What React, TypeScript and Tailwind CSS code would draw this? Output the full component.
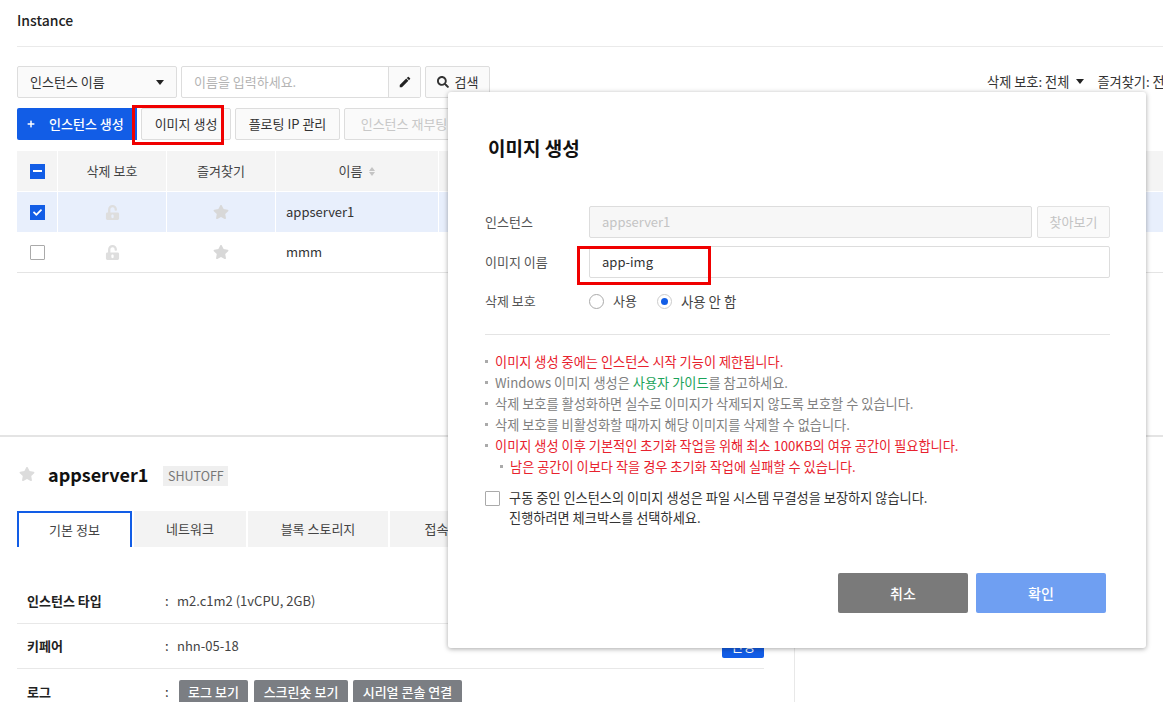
import { FaStar, FaSearch, FaCheck, FaPlus, FaUnlockAlt } from "react-icons/fa";
import { MdEdit } from "react-icons/md";
import { ReactNode } from "react";

const font = { fontFamily: '"Noto Sans CJK KR", "Noto Sans", sans-serif' };

const Caret = () => <span className="inline-block w-0 h-0 border-x-[4.5px] border-x-transparent border-t-[5px] border-t-[#222]" />;

const ToolButton = ({ children, disabled, className }: { children: ReactNode; disabled?: boolean; className: string }) => (
  <div className={`h-8 flex items-center justify-center shrink-0 bg-[#fafafa] border border-[#ddd] rounded-[2px] text-[13px] ${disabled ? "text-[#c8c8c8]" : "text-[#333]"} ${className}`}>
    {children}
  </div>
);

const Row = ({ name, selected }: { name: string; selected?: boolean }) => (
  <div className={`flex h-10 ${selected ? "bg-[#e8effc]" : "bg-white"}`}>
    <div className="w-10 flex items-center justify-center shrink-0">
      {selected ? (
        <span className="w-[15px] h-[15px] bg-[#125de6] flex items-center justify-center text-white"><FaCheck size={9} /></span>
      ) : (
        <span className="w-[15px] h-[15px] bg-white border border-[#aaa] rounded-[1px]" />
      )}
    </div>
    <div className="w-[109px] flex items-center justify-center border-l border-white text-[#dedede]"><FaUnlockAlt size={15} /></div>
    <div className="w-[109px] flex items-center justify-center border-l border-white text-[#d8d8d8]"><FaStar size={16} /></div>
    <div className="w-[163px] flex items-center pl-[10px] border-l border-white text-[13px] text-[#333]">{name}</div>
    <div className="flex-1 border-l border-white" />
  </div>
);

const Head = ({ children, w }: { children: ReactNode; w: string }) => (
  <div className={`${w} flex items-center justify-center border-l border-white text-[13px] text-[#444]`}>{children}</div>
);

const Tab = ({ children, w, active }: { children: ReactNode; w: string; active?: boolean }) => (
  <div className={`${w} h-9 shrink-0 flex items-center justify-center text-[13px] text-[#444] ${active ? "border-2 border-b-0 border-[#125de6] bg-white" : "bg-[#f3f3f3]"}`}>{children}</div>
);

const InfoRow = ({ label, children, last }: { label: string; children: ReactNode; last?: boolean }) => (
  <div className={`flex items-center h-[45px] text-[13px] ${last ? "" : "border-b border-[#e8e8e8]"}`}>
    <span className="w-[148px] pl-[10px] font-bold text-[#222]">{label}</span>
    <span className="w-3 text-[#333]">:</span>
    {children}
  </div>
);

const DarkButton = ({ children, w }: { children: ReactNode; w: string }) => (
  <span className={`${w} h-[24px] flex items-center justify-center bg-[#7b7e83] text-white rounded-[2px] text-[13px] font-medium`}>{children}</span>
);

const Note = ({ children, red, indent }: { children: ReactNode; red?: boolean; indent?: boolean }) => (
  <li className={`flex items-center h-[21px] text-[13.2px] ${red ? "text-[#e8222e]" : "text-[#808080]"} ${indent ? "pl-[15px]" : ""}`}>
    <span className="w-[3px] h-[3px] bg-[#aaa] mr-[7px] shrink-0" />
    <span>{children}</span>
  </li>
);

const RedBox = ({ className }: { className: string }) => (
  <div className={`absolute border-[3px] border-[#f00000] ${className}`} />
);

export default function App() {
  return (
    <div className="relative w-[1163px] h-[702px] overflow-hidden bg-white text-[#333]" style={font}>
      {/* Top section */}
      <div className="h-[437px] pl-[17px] border-b-2 border-[#e4e4e4]">
        <div className="h-[47px] pt-[10px] border-b border-[#eaeaea] text-[14px] font-medium text-[#222]">Instance</div>

        <div className="flex mt-[19px] gap-1 h-8">
          <div className="w-[160px] shrink-0 flex items-center justify-between pl-3 pr-3 border border-[#ddd] rounded-[2px] bg-[#fafafa] text-[13px]">
            인스턴스 이름 <Caret />
          </div>
          <div className="w-[240px] shrink-0 flex border border-[#ddd] rounded-[2px]">
            <span className="flex-1 flex items-center pl-3 text-[13px] text-[#b4b4b4]">이름을 입력하세요.</span>
            <span className="w-8 flex items-center justify-center border-l border-[#ddd] bg-[#fafafa] text-[#222]"><MdEdit size={14} /></span>
          </div>
          <div className="w-[65px] shrink-0 flex items-center justify-center gap-[6px] border border-[#ddd] rounded-[2px] bg-[#fafafa] text-[13px]">
            <FaSearch size={12} /> 검색
          </div>
          <div className="ml-[493px] shrink-0 flex items-center gap-[13px] whitespace-nowrap text-[13.2px]">
            <span className="flex items-center gap-[7px]">삭제 보호: 전체 <Caret /></span>
            <span>즐겨찾기: 전체</span>
          </div>
        </div>

        <div className="flex mt-[10px] gap-1">
          <div className="w-[120px] h-8 shrink-0 flex items-center pl-[10px] gap-[14px] bg-[#125de6] text-white text-[13px] font-medium rounded-l-[2px]">
            <FaPlus size={8} /> 인스턴스 생성
          </div>
          <ToolButton className="w-[90px]">이미지 생성</ToolButton>
          <ToolButton className="w-[105px]">플로팅 IP 관리</ToolButton>
          <ToolButton disabled className="w-[120px]">인스턴스 재부팅</ToolButton>
        </div>

        <div className="mt-[11px] border-b border-[#e4e4e4]">
          <div className="flex h-10 bg-[#f4f4f4] border-b border-white box-content">
            <div className="w-10 flex items-center justify-center shrink-0">
              <span className="w-[15px] h-[15px] bg-[#125de6] flex items-center justify-center">
                <span className="w-[9px] h-[2px] bg-white" />
              </span>
            </div>
            <Head w="w-[109px]">삭제 보호</Head>
            <Head w="w-[109px]">즐겨찾기</Head>
            <Head w="w-[163px]">
              이름
              <span className="ml-[7px] flex flex-col gap-px">
                <span className="w-0 h-0 border-x-[3px] border-x-transparent border-b-[4px] border-b-[#c4c4c4]" />
                <span className="w-0 h-0 border-x-[3px] border-x-transparent border-t-[4px] border-t-[#c4c4c4]" />
              </span>
            </Head>
            <div className="flex-1 border-l border-white" />
          </div>
          <Row name="appserver1" selected />
          <Row name="mmm" />
        </div>
      </div>

      {/* Detail section */}
      <div className="pl-[17px]">
        <div className="flex items-center mt-[28px] h-[22px]">
          <FaStar size={16} className="ml-[2px] mb-1 text-[#dcdcdc]" />
          <span className="ml-[13px] mb-1 text-[18px] font-bold text-[#111]">appserver1</span>
          <span className="ml-[15px] h-5 w-[65px] flex items-center justify-center bg-[#efefef] text-[12.5px] text-[#777]">SHUTOFF</span>
        </div>
        <div className="flex mt-[24px] gap-[2px]">
          <Tab w="w-[115px]" active>기본 정보</Tab>
          <Tab w="w-[112px]">네트워크</Tab>
          <Tab w="w-[140px]">블록 스토리지</Tab>
          <Tab w="w-[120px]">접속 정보</Tab>
        </div>
        <div className="flex mt-[32px]">
          <div className="w-[747px] shrink-0">
            <InfoRow label="인스턴스 타입"><span className="text-[#444]">m2.c1m2 (1vCPU, 2GB)</span></InfoRow>
            <InfoRow label="키페어">
              <span className="text-[#444]">nhn-05-18</span>
              <span className="ml-auto w-[42px] h-[24px] flex items-center justify-center bg-[#125de6] text-white rounded-[2px]">변경</span>
            </InfoRow>
            <InfoRow label="로그" last>
              <span className="flex gap-[5px] ml-[2px]">
                <DarkButton w="w-[69px]">로그 보기</DarkButton>
                <DarkButton w="w-[94px] ml-px">스크린숏 보기</DarkButton>
                <DarkButton w="w-[109px]">시리얼 콘솔 연결</DarkButton>
              </span>
            </InfoRow>
          </div>
          <div className="ml-[30px] h-[150px] border-l border-[#e8e8e8]" />
        </div>
      </div>

      {/* Create image dialog */}
      <div className="absolute left-[448px] top-[92px] w-[698px] h-[556px] bg-white rounded-[3px] shadow-[0_1px_5px_rgba(0,0,0,0.35)] pl-[37px] pr-[36px]">
        <h2 className="mt-[43px] pl-[3px] text-[19px] leading-[26px] font-bold text-[#111]">이미지 생성</h2>

        <div className="mt-[45px] flex flex-col text-[13px] text-[#555]">
          <div className="flex items-center h-8">
            <span className="w-[104px]">인스턴스</span>
            <span className="w-[443px] h-8 flex items-center pl-3 bg-[#f7f7f7] border border-[#ddd] rounded-[2px] text-[#c4c4c4]">appserver1</span>
            <span className="ml-[5px] w-[73px] h-8 flex items-center justify-center bg-[#fafafa] border border-[#e2e2e2] rounded-[2px] text-[#c4c4c4]">찾아보기</span>
          </div>
          <div className="flex items-center h-8 mt-2">
            <span className="w-[104px]">이미지 이름</span>
            <span className="flex-1 h-8 flex items-center pl-3 border border-[#ddd] rounded-[2px] text-[#333]">app-img</span>
          </div>
          <div className="flex items-center h-4 mt-[15px]">
            <span className="w-[104px]">삭제 보호</span>
            <span className="w-[15px] h-[15px] rounded-full border border-[#aaa]" />
            <span className="ml-[9px] text-[#444]">사용</span>
            <span className="ml-[20px] w-[15px] h-[15px] rounded-full border border-[#ccc] flex items-center justify-center">
              <span className="w-[7px] h-[7px] rounded-full bg-[#125de6]" />
            </span>
            <span className="ml-[9px] text-[13.4px] text-[#444]">사용 안 함</span>
          </div>
        </div>

        <div className="mt-[25px] border-t border-[#e4e4e4]" />

        <ul className="mt-[16px]">
          <Note red>이미지 생성 중에는 인스턴스 시작 기능이 제한됩니다.</Note>
          <Note>Windows 이미지 생성은 <span className="text-[#1aa35a]">사용자 가이드</span>를 참고하세요.</Note>
          <Note>삭제 보호를 활성화하면 실수로 이미지가 삭제되지 않도록 보호할 수 있습니다.</Note>
          <Note>삭제 보호를 비활성화할 때까지 해당 이미지를 삭제할 수 없습니다.</Note>
          <Note red>이미지 생성 이후 기본적인 초기화 작업을 위해 최소 100KB의 여유 공간이 필요합니다.</Note>
          <Note red indent>남은 공간이 이보다 작을 경우 초기화 작업에 실패할 수 있습니다.</Note>
        </ul>

        <div className="flex mt-[11px] text-[13.2px] text-[#333] leading-[20px]">
          <span className="w-[15px] h-[15px] mt-[3px] border border-[#aaa] rounded-[1px] shrink-0" />
          <p className="ml-[9px]">구동 중인 인스턴스의 이미지 생성은 파일 시스템 무결성을 보장하지 않습니다.<br />진행하려면 체크박스를 선택하세요.</p>
        </div>

        <div className="flex justify-end gap-2 mt-[45px] pr-1">
          <div className="w-[130px] h-10 flex items-center justify-center bg-[#7a7a7a] text-white text-[14px] font-medium rounded-[2px]">취소</div>
          <div className="w-[130px] h-10 flex items-center justify-center bg-[#6f9ff2] text-white text-[14px] font-medium rounded-[2px]">확인</div>
        </div>
      </div>

      <RedBox className="left-[132px] top-[105px] w-[92px] h-[40px]" />
      <RedBox className="left-[577px] top-[246px] w-[134px] h-[39px]" />
    </div>
  );
}
